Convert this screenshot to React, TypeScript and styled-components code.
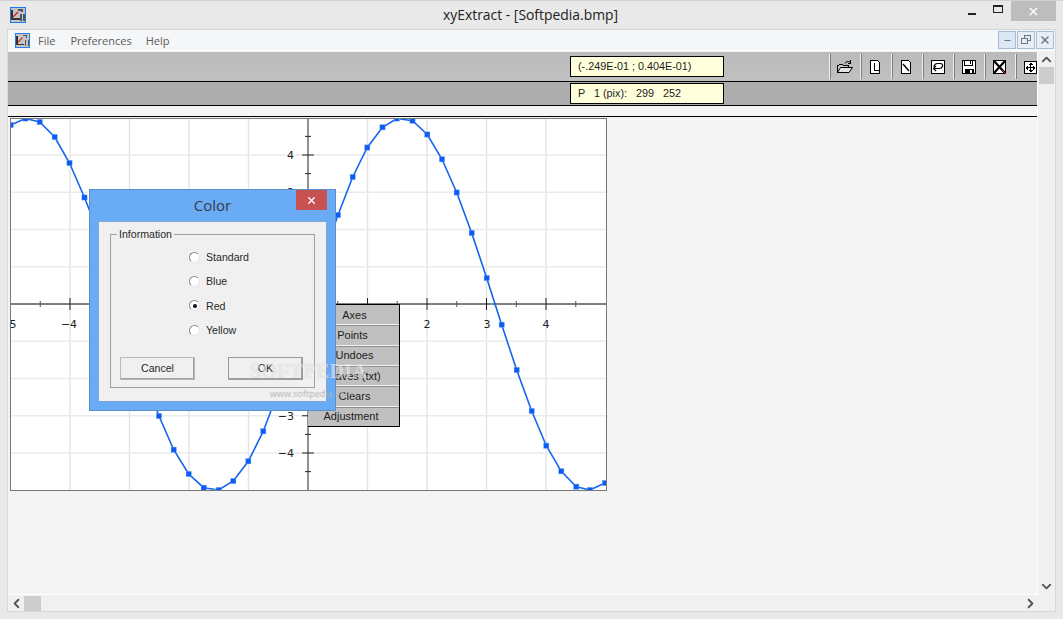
import React from "react";
import styled, { createGlobalStyle } from "styled-components";
import { X, Minus, ChevronUp, ChevronDown, ChevronLeft, ChevronRight } from "lucide-react";

const GlobalStyle = createGlobalStyle`
  html, body { margin: 0; padding: 0; height: 100%; overflow: hidden; }
  body { font-family: "Open Sans", "Noto Sans", sans-serif; background: #e9e9e9; }
`;

const Window = styled.div`
  width: 1063px;
  height: 619px;
  box-sizing: border-box;
  border-top: 1px solid #d2d2d2;
  background: #e9e9e9;
  display: flex;
  flex-direction: column;
  overflow: hidden;
`;

const TitleBar = styled.div`
  height: 28px;
  flex: none;
  display: flex;
  align-items: flex-start;
  position: relative;
  padding: 6px 0 0 10px;
  box-sizing: border-box;
`;

const TitleText = styled.div`
  position: absolute;
  left: 443px;
  top: 4px;
  font-size: 13.9px;
  line-height: 19px;
  color: #222;
  white-space: nowrap;
`;

const TitleControls = styled.div`
  margin-left: auto;
  margin-top: -6px;
  margin-right: 7px;
  display: flex;
  align-items: flex-start;
`;

const CtlButton = styled.div`
  width: 26px;
  height: 19px;
  display: flex;
  align-items: center;
  justify-content: center;
  color: #111;
`;

const MinGlyph = styled.div`
  width: 8px;
  height: 2px;
  background: #222;
  margin-top: 6px;
`;

const MaxGlyph = styled.div`
  width: 8px;
  height: 5px;
  border: 1px solid #222;
  border-top-width: 2px;
  margin-top: -3px;
  box-sizing: content-box;
`;

const CloseButton = styled.div`
  width: 45px;
  height: 20px;
  background: #bdbdbd;
  color: #fff;
  display: flex;
  align-items: center;
  justify-content: center;
`;

const Client = styled.div`
  flex: 1;
  margin: 0 7px 7px 7px;
  border: 1px solid #d6d6d6;
  background: #f4f4f4;
  display: flex;
  flex-direction: column;
  min-height: 0;
`;

const MenuBar = styled.div`
  height: 21px;
  flex: none;
  background: #f5f6f8;
  display: flex;
  align-items: center;
  padding-left: 7px;
  box-sizing: border-box;
  border-bottom: 1px solid #fff;
`;

const MenuItem = styled.span<{ $gap: number }>`
  font-size: 11px;
  color: #5c5c5c;
  margin-left: ${(p) => p.$gap}px;
`;

const MdiButtons = styled.div`
  margin-left: auto;
  margin-right: 1px;
  display: flex;
  gap: 1px;
`;

const MdiButton = styled.div<{ $active?: boolean }>`
  width: 18px;
  height: 18px;
  box-sizing: border-box;
  border: 1px solid #a9bcd3;
  background: ${(p) => (p.$active ? "#dce7f4" : "#e8eef6")};
  color: #6d7785;
  display: flex;
  align-items: center;
  justify-content: center;
`;

const Body = styled.div`
  flex: 1;
  min-height: 0;
  display: grid;
  grid-template-columns: 1fr 17px;
  grid-template-rows: 1fr 16px;
`;

const Content = styled.div`
  position: relative;
  border-right: 1px solid #fff;
  border-bottom: 1px solid #fff;
  min-width: 0;
  overflow: hidden;
  padding-top: 1px;
`;

const Toolbar = styled.div`
  height: 29px;
  box-sizing: content-box;
  background: linear-gradient(#bababa, #c1c1c1);
  border-bottom: 1px solid #000;
  display: flex;
  align-items: center;
  position: relative;
`;

const StatusRow = styled.div`
  height: 23px;
  background: #adadad;
  border-bottom: 1px solid #000;
  display: flex;
  align-items: center;
`;

const Readout = styled.div`
  width: 154px;
  height: 21px;
  box-sizing: border-box;
  margin-left: 562px;
  background: #ffffdc;
  border: 1px solid #000;
  font-family: "Liberation Sans", Arial, sans-serif;
  font-size: 10.8px;
  line-height: 19px;
  padding-left: 7px;
  color: #1c1c1c;
  white-space: pre;
`;

const Tools = styled.div`
  position: absolute;
  left: 821px;
  top: 2px;
  display: flex;
`;

const Tool = styled.div`
  width: 31px;
  height: 25px;
  box-sizing: border-box;
  border-left: 1px solid #eee;
  box-shadow: inset 1px 0 0 #7e7e7e;
  display: flex;
  align-items: center;
  justify-content: center;
`;

const Rule = styled.div`
  height: 10px;
  border-bottom: 1px solid #000;
`;

const ChartWrap = styled.div`
  margin: 1px 0 0 2px;
  width: 597px;
  height: 373px;
`;

const Dialog = styled.div`
  position: absolute;
  left: 81px;
  top: 138px;
  width: 247px;
  height: 222px;
  box-sizing: border-box;
  background: #6aabf5;
  border: 1px solid #5a8fcf;
  padding: 31px 8px 8px 8px;
  z-index: 3;
`;

const DialogTitle = styled.div`
  position: absolute;
  top: 5px;
  left: 0;
  right: 0;
  text-align: center;
  font-size: 15px;
  line-height: 20px;
  color: #333c48;
`;

const DialogClose = styled.div`
  position: absolute;
  top: 0;
  right: 8px;
  width: 31px;
  height: 20px;
  background: #c75050;
  color: #fff;
  display: flex;
  align-items: center;
  justify-content: center;
`;

const DialogBody = styled.div`
  height: 100%;
  box-sizing: border-box;
  background: #f0f0f0;
  border: 1px solid #7fa8d8;
  padding: 11px 11px 13px 11px;
  font-family: "Liberation Sans", Arial, sans-serif;
`;

const Group = styled.fieldset`
  margin: 0;
  height: 100%;
  width: 205px;
  box-sizing: border-box;
  border: 1px solid #a0a0a0;
  padding: 5px 11px 0 9px;
  display: flex;
  flex-direction: column;
`;

const GroupLegend = styled.legend`
  padding: 0 2px;
  margin-left: -3px;
  font-size: 10.6px;
  line-height: 2px;
  color: #2a2a2a;
`;

const RadioList = styled.div`
  display: flex;
  flex-direction: column;
  margin-left: 69px;
  margin-top: 5px;
`;

const RadioRow = styled.div`
  height: 24.3px;
  display: flex;
  align-items: center;
  gap: 6px;
  font-size: 10.6px;
  color: #2a2a2a;
`;

const RadioDot = styled.div<{ $on?: boolean }>`
  width: 11px;
  height: 11px;
  box-sizing: border-box;
  border-radius: 50%;
  border: 1px solid #8a8a8a;
  border-right-color: #e8e8e8;
  border-bottom-color: #e8e8e8;
  background: #fff;
  display: flex;
  align-items: center;
  justify-content: center;
  &::after {
    content: "";
    width: 4px;
    height: 4px;
    border-radius: 50%;
    background: ${(p) => (p.$on ? "#111" : "transparent")};
  }
`;

const ButtonRow = styled.div`
  display: flex;
  justify-content: space-between;
  margin-top: 15px;
`;

const PushButton = styled.div<{ $default?: boolean }>`
  width: 75px;
  height: 23px;
  box-sizing: border-box;
  background: #f0f0f0;
  border: 1px solid #fff;
  border-color: ${(p) => (p.$default ? "#6a6a6a" : "#fff #8a8a8a #8a8a8a #fff")};
  outline: 1px solid ${(p) => (p.$default ? "#9a9a9a" : "#b8b8b8")};
  outline-offset: -1px;
  box-shadow: inset -1px -1px 0 #a0a0a0;
  font-size: 10.6px;
  line-height: 21px;
  text-align: center;
  color: #2a2a2a;
`;

const PopupMenu = styled.div`
  position: absolute;
  left: 300px;
  top: 253px;
  width: 92px;
  height: 123px;
  box-sizing: border-box;
  background: #c0c0c0;
  border: 1px solid #000;
  border-left: none;
  display: flex;
  flex-direction: column;
  z-index: 2;
`;

const PopupItem = styled.div<{ $shift: number }>`
  flex: 1;
  display: flex;
  align-items: center;
  justify-content: center;
  padding-left: ${(p) => Math.max(p.$shift, 0)}px;
  padding-right: ${(p) => Math.max(-p.$shift, 0)}px;
  font-family: "Liberation Sans", Arial, sans-serif;
  font-size: 11px;
  color: #202020;
  & + & {
    border-top: 1px solid #f4f4f4;
    box-shadow: inset 0 1px 0 #8e8e8e;
  }
`;

const Watermark = styled.div`
  position: absolute;
  left: 242px;
  top: 308px;
  z-index: 4;
  pointer-events: none;
  color: rgba(255, 255, 255, 0.55);
  font-family: "Liberation Serif", serif;
  font-weight: 700;
  font-size: 20px;
  letter-spacing: 0.3px;
  line-height: 24px;
  white-space: nowrap;
  text-shadow: 0 0 1px rgba(120, 120, 120, 0.3);
`;

const WatermarkUrl = styled.div`
  font-family: "Open Sans", sans-serif;
  font-weight: 400;
  font-size: 9px;
  letter-spacing: 0;
  line-height: 12px;
  margin-left: 20px;
  margin-top: 5px;
  color: rgba(190, 190, 190, 0.75);
`;

const VScroll = styled.div`
  background: #f0f0f0;
  display: flex;
  flex-direction: column;
  align-items: center;
  padding-top: 1px;
  color: #555;
`;

const VThumb = styled.div`
  width: 15px;
  height: 17px;
  background: #cdcdcd;
`;

const ArrowDownEnd = styled.div`
  margin-top: auto;
  margin-bottom: 1px;
  display: flex;
`;

const HScroll = styled.div`
  background: #f0f0f0;
  display: flex;
  align-items: center;
  padding-left: 1px;
  color: #555;
`;

const HThumb = styled.div`
  width: 17px;
  height: 15px;
  background: #cdcdcd;
`;

const ArrowRightEnd = styled.div`
  margin-left: auto;
  display: flex;
`;

const Corner = styled.div`
  background: #f0f0f0;
`;

/* small drawings ---------------------------------------------------- */

const AppIcon = ({ size = 16 }: { size?: number }) => (
  <svg width={size} height={size} viewBox="0 0 16 16" shapeRendering="crispEdges">
    <rect x="0.5" y="0.5" width="15" height="15" fill="#c4c4c4" stroke="#1a78f0" />
    <path d="M2 3v9h8" fill="none" stroke="#333" strokeWidth="1.4" />
    <path d="M3 10l5-5" stroke="#d81818" strokeWidth="1.2" shapeRendering="auto" />
    <path d="M8 3h4v2M11 7v7M14 7v7" fill="none" stroke="#555" strokeWidth="1.3" />
  </svg>
);

const Ico = ({ children }: { children: React.ReactNode }) => (
  <svg width="16" height="14" viewBox="0 0 16 14" fill="none" stroke="#000" shapeRendering="crispEdges">
    {children}
  </svg>
);

const FolderIcon = () => (
  <Ico>
    <path d="M0.5 12.5V5.5h1l1-1h3l1 1h5v2" fill="#c8c8c8" />
    <path d="M0.5 12.5l3-5h12l-3.500 5z" fill="#e4e4e4" shapeRendering="auto" />
    <path d="M8 3.500c1-2 3-2.500 5-1.500" shapeRendering="auto" />
    <path d="M13.500 0v3.500h-3" />
  </Ico>
);

const PageAxisIcon = () => (
  <Ico>
    <path d="M2.500 0.500h7l2 2v11h-9z" fill="#fff" />
    <path d="M6.500 3v8M6.500 10.500h4" />
  </Ico>
);

const PageSlashIcon = () => (
  <Ico>
    <path d="M2.500 0.500h7l2 2v11h-9z" fill="#fff" />
    <path d="M4 4l6 7" strokeWidth="1.400" shapeRendering="auto" />
  </Ico>
);

const RefreshIcon = () => (
  <Ico>
    <rect x="1.500" y="0.500" width="13" height="13" fill="#fff" />
    <path d="M4 7c0-2.500 2-3.500 4-3.500h2.500c1.500 0 2.500 1.500 2 3s-2 2-3.500 2H3.500" strokeWidth="1.200" shapeRendering="auto" />
    <path d="M6 6l-2.500 2.500L6 11" strokeWidth="1.200" shapeRendering="auto" />
  </Ico>
);

const FloppyIcon = () => (
  <Ico>
    <rect x="1.500" y="0.500" width="13" height="13" fill="#fff" />
    <rect x="3.500" y="0.500" width="8" height="5" />
    <rect x="9" y="1" width="1" height="3" fill="#000" stroke="none" />
    <rect x="4" y="9" width="9" height="5" fill="#000" stroke="none" />
    <rect x="9" y="10" width="2" height="3" fill="#fff" stroke="none" />
  </Ico>
);

const CrossBoxIcon = () => (
  <Ico>
    <rect x="1.500" y="0.500" width="12" height="13" fill="#fff" />
    <path d="M2 1l11 12M13 1L2 13" strokeWidth="2.200" shapeRendering="auto" />
    <path d="M10 10l4 4" stroke="#c02020" strokeWidth="1" shapeRendering="auto" />
  </Ico>
);

const MoveIcon = () => (
  <Ico>
    <rect x="1.500" y="1.500" width="12" height="12" fill="#fff" />
    <path d="M7.500 3v9M3 7.500h9" />
    <path d="M6.500 3.500h2M5.500 4.500h4M6.500 11.500h2M5.500 10.500h4M3.500 6.500v2M4.500 5.500v4M11.500 6.500v2M10.500 5.500v4" />
  </Ico>
);

/* chart -------------------------------------------------------------- */

const X0 = 298;
const Y0 = 186;
const UX = 59.5;
const UY = 37.25;

// markers as read from the picture, page pixels; the plot starts at 10,118
const CurvePage: [number, number][] = [
  [10.7, 125], [25.5, 118.5], [39.7, 122], [54.7, 137], [69.5, 163], [84.5, 197.5],
  [99.4, 236], [114, 285], [129, 330], [144, 375], [159, 416], [173.7, 449.7],
  [188.7, 474], [203.7, 487.7], [218.7, 490], [233.3, 481], [248.3, 461.3], [263.3, 431.3],
  [278, 392], [293, 350], [308, 304], [323, 258], [338, 215], [352.7, 177],
  [367.3, 147.5], [382.5, 127.3], [397, 118.5], [412.5, 120.7], [427.3, 134.5], [442, 159.3],
  [456.7, 192.5], [471.7, 233], [486.7, 278], [501.7, 324.7], [516.7, 370], [531.7, 411],
  [546.3, 445.7], [561.3, 471.3], [576.3, 486.7], [590, 490], [605, 483],
];
const Curve = CurvePage.map(([x, y]) => [x - 10, y - 118] as [number, number]);

const Plot = () => {
  const grid = [-4, -3, -2, -1, 1, 2, 3, 4];
  const ticks: number[] = [];
  for (let v = -4.5; v <= 4.5; v += 0.5) if (v !== 0) ticks.push(v);
  const labelStyle = { fontFamily: "'DejaVu Sans', sans-serif", fontSize: 11, fill: "#222" };
  const line = Curve.map(([x, y]) => `${x},${y}`).join(" ");
  return (
    <svg width="597" height="373" viewBox="0 0 597 373">
      <rect x="0.5" y="0.5" width="596" height="372" fill="#fff" />
      {grid.map((v) => (
        <line key={v} x1={X0 + v * UX} x2={X0 + v * UX} y1="0" y2="372" stroke="#e4e4e4" strokeWidth="1.4" />
      ))}
      {grid.map((v) => (
        <line key={v} x1="0" x2="596" y1={Y0 - v * UY} y2={Y0 - v * UY} stroke="#ebebeb" strokeWidth="1.4" />
      ))}
      <line x1={X0} x2={X0} y1="0" y2="372" stroke="#6e6e6e" strokeWidth="1.5" />
      <line x1="0" x2="596" y1={Y0} y2={Y0} stroke="#000" />
      {ticks.map((v) => {
        const whole = Number.isInteger(v);
        return (
          <line
            key={v}
            x1={X0 + v * UX}
            x2={X0 + v * UX}
            y1={Y0 - (whole ? 6 : 3)}
            y2={Y0 + (whole ? 6 : 3)}
            stroke={whole ? "#222" : "#555"}
          />
        );
      })}
      {ticks.map((v) => {
        const whole = Number.isInteger(v);
        return (
          <line
            key={v}
            x1={X0 - (whole ? 6 : 3)}
            x2={X0 + (whole ? 6 : 3)}
            y1={Y0 - v * UY}
            y2={Y0 - v * UY}
            stroke="#222"
          />
        );
      })}
      <text x="3" y="210" textAnchor="middle" style={labelStyle}>5</text>
      <text x="59" y="210" textAnchor="middle" style={labelStyle}>−4</text>
      <text x="417" y="210" textAnchor="middle" style={labelStyle}>2</text>
      <text x="477" y="210" textAnchor="middle" style={labelStyle}>3</text>
      <text x="536" y="210" textAnchor="middle" style={labelStyle}>4</text>
      <text x="284" y="41" textAnchor="end" style={labelStyle}>4</text>
      <text x="284" y="78" textAnchor="end" style={labelStyle}>2</text>
      <text x="284" y="302" textAnchor="end" style={labelStyle}>−3</text>
      <text x="284" y="339" textAnchor="end" style={labelStyle}>−4</text>
      <polyline points={line} fill="none" stroke="#1464f0" strokeWidth="1.6" />
      {Curve.map(([x, y]) => (
        <rect key={x} x={x - 2.6} y={y - 2.6} width="5.2" height="5.2" fill="#0a5cf5" stroke="#6f9ff5" strokeWidth="0.4" />
      ))}
      <rect x="480.500" y="185" width="1" height="2" fill="#18e0f0" />
      <rect x="389" y="0.500" width="1.500" height="1.500" fill="#18e0f0" />
      <rect x="204" y="371" width="1.500" height="1.500" fill="#18e0f0" />
      <rect x="0.5" y="0.5" width="596" height="372" fill="none" stroke="#777" />
    </svg>
  );
};

const popupItems: [string, number][] = [
  ["Axes", 2],
  ["Points", -2],
  ["Undoes", 2],
  ["Saves (txt)", 2],
  ["Clears", 2],
  ["Adjustment", -5],
];

export default function App() {
  return (
    <Window>
      <GlobalStyle />
      <TitleBar>
        <AppIcon />
        <TitleText>xyExtract - [Softpedia.bmp]</TitleText>
        <TitleControls>
          <CtlButton><MinGlyph /></CtlButton>
          <CtlButton><MaxGlyph /></CtlButton>
          <CloseButton><X size={13} strokeWidth={2.6} /></CloseButton>
        </TitleControls>
      </TitleBar>
      <Client>
        <MenuBar>
          <AppIcon size={15} />
          <MenuItem $gap={8}>File</MenuItem>
          <MenuItem $gap={15}>Preferences</MenuItem>
          <MenuItem $gap={14}>Help</MenuItem>
          <MdiButtons>
            <MdiButton $active><Minus size={9} strokeWidth={3} /></MdiButton>
            <MdiButton>
              <svg width="10" height="10" viewBox="0 0 10 10" fill="none" stroke="#6d7785" shapeRendering="crispEdges">
                <rect x="3.500" y="0.500" width="6" height="5" />
                <rect x="0.500" y="3.500" width="6" height="5" fill="#e8eef6" />
              </svg>
            </MdiButton>
            <MdiButton><X size={12} strokeWidth={3} /></MdiButton>
          </MdiButtons>
        </MenuBar>
        <Body>
          <Content>
            <Toolbar>
              <Readout>(-.249E-01 ; 0.404E-01)</Readout>
              <Tools>
                <Tool><FolderIcon /></Tool>
                <Tool><PageAxisIcon /></Tool>
                <Tool><PageSlashIcon /></Tool>
                <Tool><RefreshIcon /></Tool>
                <Tool><FloppyIcon /></Tool>
                <Tool><CrossBoxIcon /></Tool>
                <Tool><MoveIcon /></Tool>
              </Tools>
            </Toolbar>
            <StatusRow>
              <Readout>{"P   1 (pix):   299   252"}</Readout>
            </StatusRow>
            <Rule />
            <ChartWrap>
              <Plot />
            </ChartWrap>
            <PopupMenu>
              {popupItems.map(([t, shift]) => (
                <PopupItem key={t} $shift={shift}>{t}</PopupItem>
              ))}
            </PopupMenu>
            <Dialog>
              <DialogTitle>Color</DialogTitle>
              <DialogClose><X size={11} strokeWidth={2.8} /></DialogClose>
              <DialogBody>
                <Group>
                  <GroupLegend>Information</GroupLegend>
                  <RadioList>
                    <RadioRow><RadioDot />Standard</RadioRow>
                    <RadioRow><RadioDot />Blue</RadioRow>
                    <RadioRow><RadioDot $on />Red</RadioRow>
                    <RadioRow><RadioDot />Yellow</RadioRow>
                  </RadioList>
                  <ButtonRow>
                    <PushButton>Cancel</PushButton>
                    <PushButton $default>OK</PushButton>
                  </ButtonRow>
                </Group>
              </DialogBody>
            </Dialog>
            <Watermark>
              SOFTPEDIA
              <WatermarkUrl>www.softpedia.com</WatermarkUrl>
            </Watermark>
          </Content>
          <VScroll>
            <ChevronUp size={15} strokeWidth={3} />
            <VThumb />
            <ArrowDownEnd><ChevronDown size={15} strokeWidth={3} /></ArrowDownEnd>
          </VScroll>
          <HScroll>
            <ChevronLeft size={15} strokeWidth={3} />
            <HThumb />
            <ArrowRightEnd><ChevronRight size={15} strokeWidth={3} /></ArrowRightEnd>
          </HScroll>
          <Corner />
        </Body>
      </Client>
    </Window>
  );
}
